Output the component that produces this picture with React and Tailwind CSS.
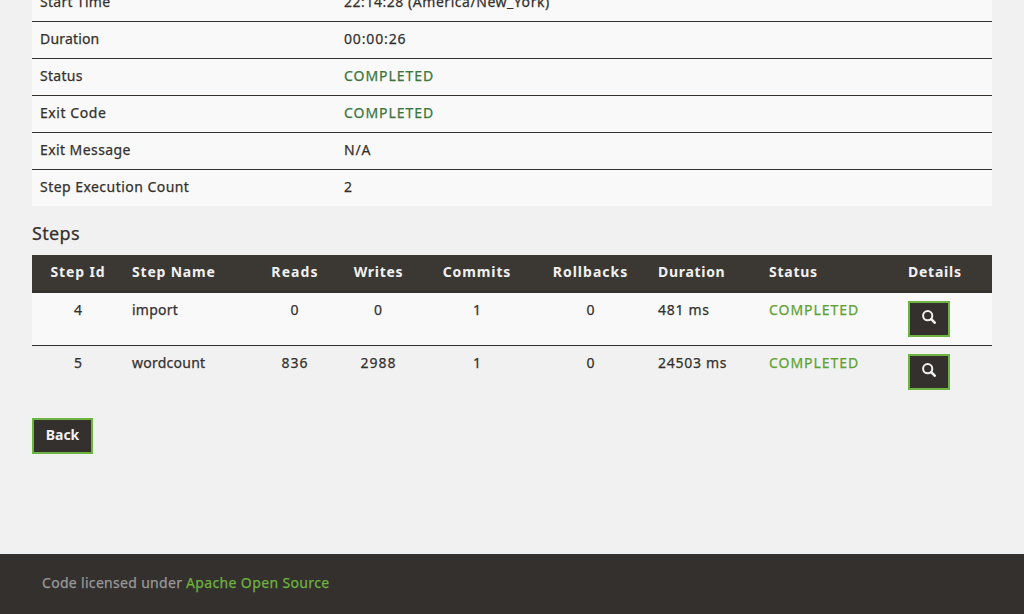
const details = [
  { label: "Start Time", ls: "tracking-[0.3px]", value: "22:14:28 (America/New_York)", vs: "tracking-[0.54px]" },
  { label: "Duration", ls: "tracking-[0.18px]", value: "00:00:26", vs: "tracking-[0.85px]" },
  { label: "Status", ls: "tracking-[0.3px]", value: "COMPLETED", vs: "tracking-[0.95px] text-[#3c763d]" },
  { label: "Exit Code", ls: "tracking-[0.57px]", value: "COMPLETED", vs: "tracking-[0.95px] text-[#3c763d]" },
  { label: "Exit Message", ls: "tracking-[0.42px]", value: "N/A", vs: "tracking-[0.8px]" },
  { label: "Step Execution Count", ls: "tracking-[0.46px]", value: "2", vs: "" },
];

const headers = [
  { text: "Step Id", cls: "text-center tracking-[0.9px]" },
  { text: "Step Name", cls: "tracking-[0.8px]" },
  { text: "Reads", cls: "text-center tracking-[1.1px]" },
  { text: "Writes", cls: "text-center tracking-[0.7px]" },
  { text: "Commits", cls: "text-center tracking-[0.9px]" },
  { text: "Rollbacks", cls: "text-center tracking-[1px]" },
  { text: "Duration", cls: "tracking-[0.7px]" },
  { text: "Status", cls: "tracking-[0.75px]" },
  { text: "Details", cls: "tracking-[0.75px]" },
];

const steps = [
  { id: 4, name: "import", reads: 0, writes: 0, commits: 1, rollbacks: 0, duration: "481 ms" },
  { id: 5, name: "wordcount", reads: 836, writes: 2988, commits: 1, rollbacks: 0, duration: "24503 ms" },
];

const columns = "grid grid-cols-[92px_132px_78px_89px_108px_119px_111px_139px_92px]";

function SearchIcon() {
  return (
    <svg viewBox="0 0 14 14" className="size-3.5" fill="none" stroke="#f1f1f1">
      <circle cx="5.7" cy="5.7" r="4.6" strokeWidth="2" />
      <path d="M9.2 9.2 12.7 12.7" strokeWidth="2.6" strokeLinecap="round" />
    </svg>
  );
}

function StepRow({ step, className }) {
  return (
    <div className={`${columns} h-[53px] pt-[7px] leading-5 *:px-2 ${className}`}>
      <div className="text-center">{step.id}</div>
      <div className="tracking-[0.25px]">{step.name}</div>
      <div className="text-center tracking-[1px]">{step.reads}</div>
      <div className="text-center tracking-[1px]">{step.writes}</div>
      <div className="text-center">{step.commits}</div>
      <div className="text-center">{step.rollbacks}</div>
      <div className="tracking-[0.72px]">{step.duration}</div>
      <div className="tracking-[0.95px] text-[#5fa134]">COMPLETED</div>
      <div className="pt-px">
        <button className="flex h-9 w-[42px] justify-center border-2 border-[#6db33f] bg-[#34302d] pt-[7px]">
          <SearchIcon />
        </button>
      </div>
    </div>
  );
}

export default function App() {
  return (
    <div className="flex h-[614px] flex-col overflow-hidden bg-[#f1f1f1] font-['Noto_Sans',sans-serif] text-sm text-[#34302d] [-webkit-text-stroke:0.25px]">
      <main className="-mt-4 flex-1 px-8">
        <div className="bg-[#f9f9f9]">
          {details.map((row) => (
            <div key={row.label} className="flex h-[37px] border-t border-[#34302d] pt-[7px] leading-5">
              <div className={`w-76 px-2 ${row.ls}`}>{row.label}</div>
              <div className={`px-2 ${row.vs}`}>{row.value}</div>
            </div>
          ))}
        </div>
        <h2 className="mt-[15px] mb-2.5 h-6 text-lg leading-6 tracking-[0.35px]">Steps</h2>
        <div>
          <div className={`${columns} h-[38px] border-b-2 border-[#34302d] bg-[#3b3834] pt-[7px] leading-5 font-bold text-[#f1f1f1] [-webkit-text-stroke:0] *:px-2`}>
            {headers.map((h) => (
              <div key={h.text} className={h.cls}>{h.text}</div>
            ))}
          </div>
          <StepRow step={steps[0]} className="border-b border-[#34302d] bg-[#f9f9f9]" />
          <StepRow step={steps[1]} className="" />
        </div>
        <button className="mt-[19px] h-9 w-[61px] border-2 border-[#6db33f] bg-[#34302d] pb-[2px] leading-5 font-bold text-[#f1f1f1] [-webkit-text-stroke:0]">
          Back
        </button>
      </main>
      <footer className="h-15 bg-[#34302d] pt-[19px] pl-[42px] leading-5 text-[#999]">
        <span className="tracking-[0.31px]">Code licensed under</span>{" "}
        <a className="tracking-[0.37px] text-[#6db33f]">Apache Open Source</a>
      </footer>
    </div>
  );
}
